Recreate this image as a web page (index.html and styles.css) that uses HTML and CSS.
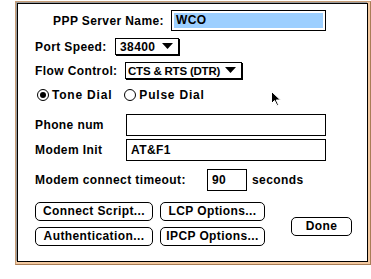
FILE: index.html
```html
<html>
  <head>
    <meta http-equiv="Content-Type" content="text/html; charset=UTF-8" />
    <title>PPP Server</title>
    <link rel="stylesheet" href="styles.css">
  </head>
  <body>
  <div class="frame">
    <div class="dialog">

      <div class="row r-server">
        <div class="label l-server">PPP Server Name:</div>
        <div class="field f-server"><span class="sel">WCO</span></div>
      </div>

      <div class="row r-speed">
        <div class="label l-speed">Port Speed:</div>
        <div class="popup p-speed">
          <span>38400</span>
          <svg width="11" height="7" viewBox="0 0 11 7"><polygon points="0,0 11,0 5.5,6" fill="#000"/></svg>
        </div>
      </div>

      <div class="row r-flow">
        <div class="label l-flow">Flow Control:</div>
        <div class="popup p-flow">
          <span>CTS &amp; RTS (DTR)</span>
          <svg width="11" height="7" viewBox="0 0 11 7"><polygon points="0,0 11,0 5.5,6" fill="#000"/></svg>
        </div>
      </div>

      <div class="row r-dial">
        <div class="radio on"><span class="dot"></span></div>
        <div class="rtext">Tone Dial</div>
        <div class="radio r-pulse"></div>
        <div class="rtext">Pulse Dial</div>
      </div>

      <div class="row r-phone">
        <div class="label l-phone">Phone num</div>
        <div class="field f-wide"></div>
      </div>

      <div class="row r-init">
        <div class="label l-phone">Modem Init</div>
        <div class="field f-wide">AT&amp;F1</div>
      </div>

      <div class="row r-timeout">
        <div class="label l-timeout">Modem connect timeout:</div>
        <div class="field f-small">90</div>
        <div class="label l-sec">seconds</div>
      </div>

      <div class="buttons">
        <div class="btn-grid">
          <div class="btn b-left">Connect Script...</div>
          <div class="btn b-right">LCP Options...</div>
          <div class="btn b-left">Authentication...</div>
          <div class="btn b-right">IPCP Options...</div>
        </div>
        <div class="btn b-done">Done</div>
      </div>

    </div>
  </div>

  <svg class="cursor" width="11" height="16" viewBox="0 0 11 16">
    <path d="M0.5,0.5 L0.5,12.5 L3.5,9.5 L6,14.5 L7.5,13.8 L5.2,9 L9.5,9 Z" fill="#000" stroke="#fff" stroke-width="1"/>
  </svg>
  </body>
</html>
```

FILE: styles.css
```css
body {
  margin: 0;
  position: relative;
  width: 371px;
  height: 279px;
  background: #fff;
  font-family: "Liberation Sans", Arial, sans-serif;
  font-weight: bold;
  font-size: 12px;
  letter-spacing: 0.4px;
  color: #000;
}
.frame {
  box-sizing: border-box;
  width: 356px;
  height: 264px;
  margin: 1px 0 0 15px;
  border: 1px solid #c79d76;
  border-right-color: #a97d56;
  border-bottom-color: #a97d56;
  background: #f3c9a0;
  padding: 1px 2px 2px 1px;
}
.dialog {
  box-sizing: border-box;
  height: 100%;
  border: 1px solid #000;
  box-shadow: -1px -1px 0 #9c9c9c;
  background: #fff;
  padding: 5px 0 0 17px;
}
.row {
  display: flex;
  align-items: center;
}
.label {
  white-space: nowrap;
}
.r-server {
  height: 21px;
  margin-top: 1px;
}
.l-server {
  width: 129px;
  text-align: right;
  margin-right: 7px;
}
.field {
  box-sizing: border-box;
  border: 1px solid #000;
  background: #fff;
  height: 22px;
  line-height: 20px;
  padding: 0 4px;
}
.f-server {
  width: 155px;
  height: 21px;
  padding: 2px;
  line-height: 15px;
}
.sel {
  display: block;
  height: 15px;
  background: #9ccfff;
  padding-left: 2px;
}
.r-speed {
  margin-top: 7px;
  height: 17px;
}
.l-speed {
  width: 80px;
}
.popup {
  box-sizing: border-box;
  height: 17px;
  border: 1px solid #000;
  box-shadow: 1px 1px 0 #000;
  display: flex;
  align-items: center;
  justify-content: space-between;
  padding: 0 5px 0 4px;
  background: #fff;
  white-space: nowrap;
}
.p-speed {
  width: 64px;
}
.r-flow {
  margin-top: 7px;
  height: 17px;
}
.l-flow {
  width: 90px;
}
.p-flow {
  width: 117px;
  padding-left: 2px;
  letter-spacing: -0.2px;
  font-size: 11.5px;
}
.r-dial {
  margin-top: 10px;
  height: 12px;
}
.radio {
  box-sizing: border-box;
  width: 12px;
  height: 12px;
  border: 1px solid #000;
  border-radius: 50%;
  margin-left: 2px;
  display: flex;
  align-items: center;
  justify-content: center;
}
.dot {
  width: 6px;
  height: 6px;
  border-radius: 50%;
  background: #000;
}
.rtext {
  margin-left: 3px;
  letter-spacing: 0.8px;
}
.r-pulse {
  margin-left: 12px;
}
.r-phone {
  margin-top: 13px;
  height: 22px;
}
.l-phone {
  width: 91px;
}
.f-wide {
  width: 200px;
}
.r-init {
  margin-top: 3px;
  height: 22px;
}
.r-timeout {
  margin-top: 8px;
  height: 22px;
}
.l-timeout {
  width: 172px;
}
.f-small {
  width: 40px;
}
.l-sec {
  margin-left: 5px;
}
.buttons {
  display: flex;
  margin-top: 11px;
}
.btn-grid {
  display: grid;
  grid-template-columns: 118px 105px;
  column-gap: 7px;
  row-gap: 6px;
}
.btn {
  box-sizing: border-box;
  height: 19px;
  border: 1px solid #000;
  border-radius: 5px;
  text-align: center;
  line-height: 17px;
  background: #fff;
}
.b-done {
  width: 61px;
  margin: 15px 0 0 26px;
}
.cursor {
  position: absolute;
  left: 271px;
  top: 91px;
}
```
